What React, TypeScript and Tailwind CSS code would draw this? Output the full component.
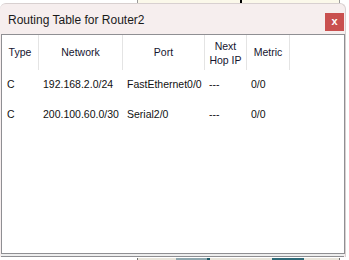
const cols = "grid grid-cols-[37px_84px_82px_42px_43px_1fr]";

const rows = [
    { type: "C", network: "192.168.2.0/24", port: "FastEthernet0/0", hop: "---", metric: "0/0" },
    { type: "C", network: "200.100.60.0/30", port: "Serial2/0", hop: "---", metric: "0/0" },
];

export default function App() {
    return (
        <div
            className="w-[349px] h-[260px] bg-white overflow-hidden flex flex-col text-[#111]"
            style={{ fontFamily: '"Liberation Sans", Arial, sans-serif' }}
        >
            {/* what peeks out above the window */}
            <div className="h-[3px] flex shrink-0">
                <div className="w-[137px]" />
                <div className="w-[203px] bg-[#fbf8ea] border-x border-[#9a9a9a] flex">
                    <div className="w-[102px]" />
                    <div className="w-[2px] bg-black" />
                </div>
            </div>

            <div className="w-[346px] h-[254px] shrink-0 bg-[#f6eeee] rounded-t-[6px] border-t border-r border-[#d8d0d0] flex flex-col">
                <div className="h-[30px] flex items-center justify-between pl-[8px] pr-[1px]">
                    <span className="text-[12px] text-[#1a1a1a] mt-[2px]">Routing Table for Router2</span>
                    <button
                        type="button"
                        className="w-[19px] h-[18px] bg-[#c9504f] text-white text-[11px] font-bold leading-none flex items-center justify-center mt-[5px]"
                    >
                        x
                    </button>
                </div>

                <div className="ml-[1px] w-[344px] h-[220px] bg-white border border-[#8f8f93] text-[10.5px]">
                    <div className={`${cols} h-[35px]`}>
                        <div className="flex items-center justify-center border-r border-[#e4e4e4] text-[#151530]">Type</div>
                        <div className="flex items-center justify-center border-r border-[#e4e4e4] text-[#151530]">Network</div>
                        <div className="flex items-center justify-center border-r border-[#e4e4e4] text-[#151530]">Port</div>
                        <div className="flex items-center justify-center border-r border-[#e4e4e4] text-[#151530] text-center leading-[14px] pt-[1px]">
                            Next
                            <br />
                            Hop IP
                        </div>
                        <div className="flex items-center justify-center border-r border-[#e4e4e4] text-[#151530]">Metric</div>
                        <div />
                    </div>
                    {rows.map((r, i) => (
                        <div key={i} className={`${cols} h-[30px] items-center`}>
                            <div className="pl-[5px]">{r.type}</div>
                            <div className="pl-[4px]">{r.network}</div>
                            <div className="pl-[4px] whitespace-nowrap">{r.port}</div>
                            <div className="pl-[4px]">{r.hop}</div>
                            <div className="pl-[4px]">{r.metric}</div>
                            <div />
                        </div>
                    ))}
                </div>
                <div className="h-[3px] mx-[1px] border-b border-[#8f8f93] bg-[#eeeeee]" />
            </div>

            {/* taskbar bits below */}
            <div className="flex-1 flex mt-[1px]">
                <div className="w-[137px]" />
                <div className="w-[203px] bg-[#e9e5db] border-x border-[#707070] flex">
                    <div className="w-[38px]" />
                    <div className="w-[31px] bg-[#8fa7ae]" />
                    <div className="w-[3px] bg-[#1d5a66]" />
                    <div className="w-[62px]" />
                    <div className="w-[32px] bg-[#2f6a78]" />
                </div>
            </div>
        </div>
    );
}
